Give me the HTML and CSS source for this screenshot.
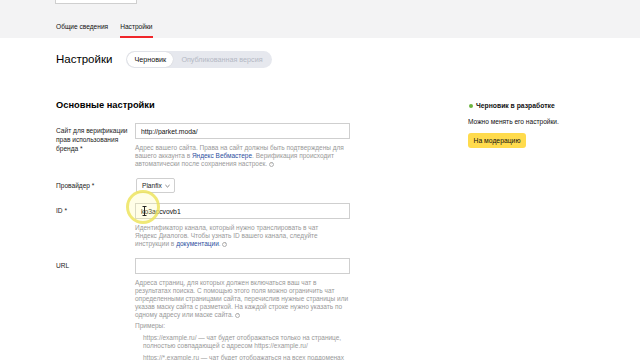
FILE: index.html
```html
<!DOCTYPE html>
<html lang="ru">
  <head>
    <meta charset="utf-8">
    <title>Настройки</title>
    <link rel="stylesheet" href="styles.css">
  </head>
  <body>
    <header class="topbar">
      <div class="topbar__search"></div>
      <nav class="tabs">
        <a class="tab">Общие сведения</a>
        <a class="tab tab--active">Настройки</a>
      </nav>
    </header>

    <main class="page">
      <div class="page-head">
        <h1 class="page-title">Настройки</h1>
        <div class="switch">
          <span class="switch__item switch__item--on">Черновик</span>
          <span class="switch__item">Опубликованная версия</span>
        </div>
      </div>

      <div class="layout">
        <section class="settings">
          <h2 class="settings__title">Основные настройки</h2>

          <div class="row">
            <label class="row__label">Сайт для верификации прав использования бренда *</label>
            <div class="row__field">
              <input class="input" type="text" value="http://parket.moda/">
              <p class="hint">Адрес вашего сайта. Права на сайт должны быть подтверждены для<br>вашего аккаунта в <a href="#">Яндекс Вебмастере</a>. Верификация происходит<br>автоматически после сохранения настроек. <span class="help">?</span></p>
            </div>
          </div>

          <div class="row">
            <label class="row__label">Провайдер *</label>
            <div class="row__field">
              <button class="select">Planfix
                <svg viewBox="0 0 6 4"><polyline points="0.5,0.8 3,3.2 5.5,0.8" /></svg>
              </button>
            </div>
          </div>

          <div class="row">
            <label class="row__label">ID *</label>
            <div class="row__field row__field--cursor">
              <input class="input" type="text" value="ko3accvovb1">
              <p class="hint">Идентификатор канала, который нужно транслировать в чат<br>Яндекс Диалогов. Чтобы узнать ID вашего канала, следуйте<br>инструкции в <a href="#">документации</a>. <span class="help">?</span></p>
              <span class="click-spot"></span>
              <svg class="ibeam" viewBox="0 0 5 10"><path d="M0.5,0.5 L4.5,0.5 M2.5,0.5 L2.5,9.5 M0.5,9.5 L4.5,9.5" /></svg>
            </div>
          </div>

          <div class="row">
            <label class="row__label">URL</label>
            <div class="row__field">
              <input class="input" type="text" value="">
              <p class="hint">Адреса страниц, для которых должен включаться ваш чат в<br>результатах поиска. С помощью этого поля можно ограничить чат<br>определенными страницами сайта, перечислив нужные страницы или<br>указав маску сайта с разметкой. На каждой строке нужно указать по<br>одному адресу или маске сайта. <span class="help">?</span></p>
              <p class="hint hint--label">Примеры:</p>
              <ul class="examples">
                <li>https://example.ru/ — чат будет отображаться только на странице,<br>полностью совпадающей с адресом https://example.ru/</li>
                <li>https://*.example.ru — чат будет отображаться на всех поддоменах</li>
              </ul>
            </div>
          </div>
        </section>

        <aside class="status">
          <div class="status__title"><span class="status__dot"></span>Черновик в разработке</div>
          <p class="status__text">Можно менять его настройки.</p>
          <button class="btn">На модерацию</button>
        </aside>
      </div>
    </main>
  </body>
</html>
```

FILE: styles.css
```css
* {
  box-sizing: border-box;
}
body {
  margin: 0;
  font-family: 'Liberation Sans', Arial, sans-serif;
  color: #000;
  background: #fff;
}
.topbar {
  height: 38px;
  padding-left: 55px;
  background: #f3f3f4;
  display: flex;
  flex-direction: column;
}
.topbar__search {
  width: 82px;
  height: 4px;
  background: #fff;
  border: 1px solid #cfcfcf;
  border-top: 0;
}
.tabs {
  display: flex;
  gap: 12px;
  margin-top: auto;
  padding-left: 1px;
}
.tab {
  font-size: 6.6px;
  line-height: 9px;
  color: #111;
  padding-bottom: 5px;
  border-bottom: 2px solid transparent;
}
.tab--active { border-color: #f0262a; }

.page {
  padding-left: 56px;
}
.page-head {
  display: flex;
  align-items: center;
  margin-top: 13px;
  height: 17px;
}
.page-title {
  margin: 0;
  font-size: 11.5px;
  font-weight: normal;
  line-height: 17px;
}
.switch {
  display: flex;
  height: 17px;
  margin-left: 14px;
  padding: 1px;
  background: #e6e8ee;
  border-radius: 9px;
  font-size: 7.2px;
}
.switch__item {
  padding: 0 8px;
  line-height: 15px;
  color: #b4b8c4;
  border-radius: 8px;
}
.switch__item--on {
  width: 46px;
  padding: 0;
  text-align: center;
  color: #111;
  background: #fff;
  box-shadow: 0 0 1px rgba(0, 0, 0, 0.2);
}

.layout {
  display: grid;
  grid-template-columns: 412px 1fr;
  margin-top: 31px;
}
.settings__title {
  margin: 0 0 12px;
  font-size: 9.3px;
  line-height: 12px;
  font-weight: bold;
}
.row {
  display: flex;
}
.row + .row { margin-top: 10px; }
.row__label {
  flex: none;
  width: 79px;
  padding: 3px 6px 0 0;
  font-size: 6.6px;
  line-height: 9px;
  color: #222;
}
.row__field {
  width: 215px;
}
.row__field--cursor { position: relative; }
.input {
  display: block;
  width: 100%;
  height: 16px;
  margin: 0;
  padding: 0 5px;
  border: 1px solid #cfcfcf;
  font-family: inherit;
  font-size: 6.8px;
  color: #111;
}
.hint {
  margin: 5px 0 0;
  font-size: 6.5px;
  line-height: 8px;
  color: #999;
  white-space: nowrap;
}
.hint a {
  color: #2d4f9e;
  text-decoration: none;
}
.hint--label { margin-top: 3px; }
.help {
  display: inline-block;
  width: 5px;
  height: 5px;
  border: 1px solid #b0b0b0;
  border-radius: 50%;
  font-size: 3.5px;
  line-height: 3px;
  text-align: center;
  vertical-align: middle;
}
.examples {
  margin: 4px 0 0;
  padding-left: 8px;
  list-style: none;
  font-size: 6.5px;
  line-height: 8px;
  color: #999;
  white-space: nowrap;
}
.examples li + li { margin-top: 4px; }

.select {
  display: flex;
  align-items: center;
  gap: 3px;
  height: 15px;
  margin: 0 0 0 1px;
  padding: 0 4px 0 5px;
  background: #fff;
  border: 1px solid #cfcfcf;
  border-radius: 2px;
  font-family: inherit;
  font-size: 6.6px;
  color: #222;
}
.select svg {
  width: 5px;
  height: 4px;
  fill: none;
  stroke: #444;
  stroke-width: 0.8;
}

.click-spot {
  position: absolute;
  left: -9px;
  top: -13px;
  width: 34px;
  height: 34px;
  border: 3px solid rgba(236, 228, 90, 0.8);
  border-radius: 50%;
  background: rgba(255, 250, 160, 0.25);
}
.ibeam {
  position: absolute;
  left: 7px;
  top: 3px;
  width: 5px;
  height: 10px;
  fill: none;
  stroke: #111;
  stroke-width: 0.9;
}

.status {
  padding-top: 2px;
  font-size: 6.6px;
  color: #111;
}
.status__title {
  display: flex;
  align-items: center;
  gap: 3px;
  font-size: 6.8px;
  font-weight: bold;
  line-height: 10px;
}
.status__dot {
  width: 4px;
  height: 4px;
  margin-left: 1px;
  border-radius: 50%;
  background: #6cb43f;
}
.status__text {
  margin: 6px 0 0;
  line-height: 10px;
}
.btn {
  display: block;
  width: 58px;
  height: 15px;
  margin-top: 6px;
  padding: 0;
  background: #ffdb4d;
  border: 0;
  border-radius: 3px;
  font-family: inherit;
  font-size: 6.8px;
  color: #111;
}
```
